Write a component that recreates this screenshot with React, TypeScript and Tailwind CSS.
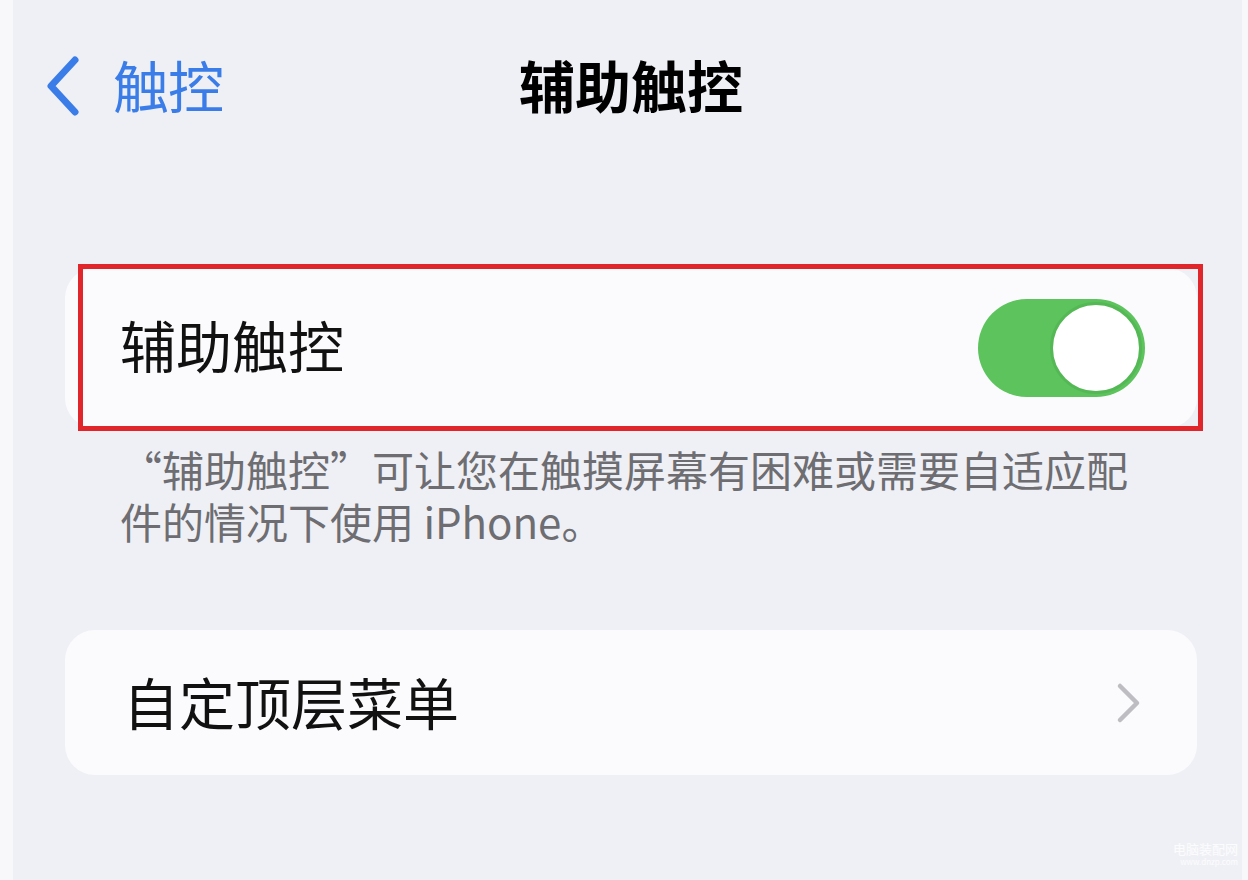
import React from "react";

const cjk = { fontFamily: '"Noto Sans CJK SC", "Noto Sans", sans-serif' };

export default function App() {
  return (
    <div
      className="w-[1248px] h-[880px] bg-[#eff0f5] flex overflow-hidden relative"
      style={cjk}
    >
      <div className="w-[13px] h-full bg-[#f8f8fb]" />
      <div className="flex-1 flex flex-col">
        {/* Nav bar */}
        <div className="grid grid-cols-[1fr_auto_1fr] items-center h-[56px] mt-[52px]">
          <div className="flex items-center pl-[32px]">
            <svg width="36" height="60" viewBox="0 0 36 60" className="shrink-0 mt-[4px]">
              <path
                d="M30 4 L6 30 L30 56"
                fill="none"
                stroke="#3a7de8"
                strokeWidth="7"
                strokeLinecap="round"
                strokeLinejoin="round"
              />
            </svg>
            <span className="ml-[32px] text-[56px] leading-none text-[#3a7de8] tracking-[-1px]">
              触控
            </span>
          </div>
          <div className="text-[56px] leading-none font-bold text-black ml-[7px]">
            辅助触控
          </div>
          <div />
        </div>

        {/* Card 1 */}
        <div className="relative mt-[160px] ml-[52px] mr-[45px]">
          <div className="h-[160px] rounded-[30px] bg-[#fbfbfd] flex items-center justify-between pl-[55px] pr-[52px]">
            <span className="text-[56px] leading-none text-[#111] mb-[8px]">辅助触控</span>
            <div className="w-[167px] h-[98px] rounded-full bg-[#5cc35d] flex items-center justify-end pr-[3px]">
              <div className="w-[92px] h-[92px] rounded-full bg-white border-[3px] border-[#54b855]" />
            </div>
          </div>
          <div className="absolute left-[13px] right-[-6px] top-[-4px] bottom-[-3px] border-[5px] border-[#e0262b] pointer-events-none" />
        </div>

        {/* Footer text */}
        <div className="mt-[15px] ml-[107px] mr-[100px] text-[42px] leading-[52px] text-[#6d6d72]">
          “辅助触控”可让您在触摸屏幕有困难或需要自适应配件的情况下使用 iPhone。
        </div>

        {/* Card 2 */}
        <div className="mt-[83px] ml-[52px] mr-[45px] h-[145px] rounded-[30px] bg-[#fbfbfd] flex items-center justify-between pl-[58px] pr-[55px]">
          <span className="text-[56px] leading-none text-[#111] mb-[4px]">自定顶层菜单</span>
          <svg width="26" height="42" viewBox="0 0 26 42">
            <path
              d="M4 4 L21 21 L4 38"
              fill="none"
              stroke="#bdbdc2"
              strokeWidth="4.5"
              strokeLinecap="round"
              strokeLinejoin="round"
            />
          </svg>
        </div>
      </div>
      <div className="w-[6px] h-full bg-[#f8f8fb]" />

      {/* watermark */}
      <div className="absolute right-[10px] bottom-[14px] flex flex-col items-end text-white/80 leading-none">
        <span className="text-[13px]">电脑装配网</span>
        <span className="text-[8px] mt-[3px]">www.dnzp.com</span>
      </div>
    </div>
  );
}
